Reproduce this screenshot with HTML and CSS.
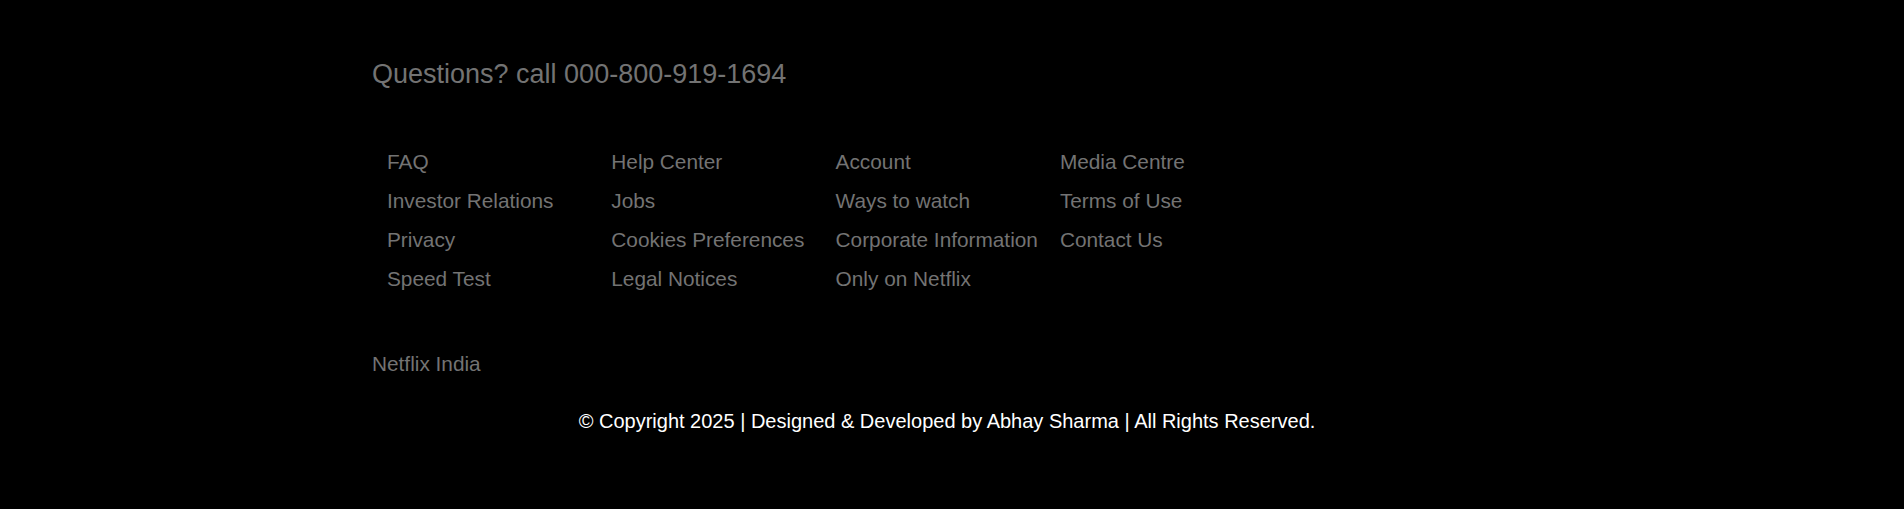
FILE: index.html
```html
<!DOCTYPE html>
<html lang="en">
<head>
<meta charset="utf-8">
<title>Netflix Footer</title>
<link rel="stylesheet" href="styles.css">
</head>
<body>
<footer class="footer">
  <div class="footer-inner">
    <p class="questions">Questions? call 000-800-919-1694</p>
    <div class="links">
      <a href="#">FAQ</a>
      <a href="#">Help Center</a>
      <a href="#">Account</a>
      <a href="#">Media Centre</a>
      <a href="#">Investor Relations</a>
      <a href="#">Jobs</a>
      <a href="#">Ways to watch</a>
      <a href="#">Terms of Use</a>
      <a href="#">Privacy</a>
      <a href="#">Cookies Preferences</a>
      <a href="#">Corporate Information</a>
      <a href="#">Contact Us</a>
      <a href="#">Speed Test</a>
      <a href="#">Legal Notices</a>
      <a href="#">Only on Netflix</a>
    </div>
    <p class="country">Netflix India</p>
  </div>
  <p class="copyright">© Copyright 2025 | Designed &amp; Developed by Abhay Sharma | All Rights Reserved.</p>
</footer>
</body>
</html>
```
FILE: styles.css
```css
* { box-sizing: border-box; }
html, body {
  margin: 0;
  padding: 0;
  background: #000;
}
body {
  font-family: "Liberation Sans", Arial, sans-serif;
  color: #737373;
}
.footer {
  padding: 58px 0 40px;
}
.footer-inner {
  width: 1160px;
  margin: 0 auto;
}
.questions {
  margin: 0;
  font-size: 27px;
  line-height: 32px;
  color: #737373;
}
.links {
  display: grid;
  grid-template-columns: repeat(4, 224.3px);
  grid-auto-rows: 39px;
  align-items: center;
  margin-top: 52px;
  padding-left: 15px;
}
.links a {
  color: #737373;
  text-decoration: none;
  font-size: 20.8px;
  line-height: 24px;
}
.country {
  margin: 54px 0 0;
  font-size: 20.8px;
  line-height: 24px;
}
.copyright {
  margin: 33px 0 0;
  text-align: center;
  color: #fff;
  font-size: 20px;
  line-height: 24px;
  padding-right: 10px;
}
```
